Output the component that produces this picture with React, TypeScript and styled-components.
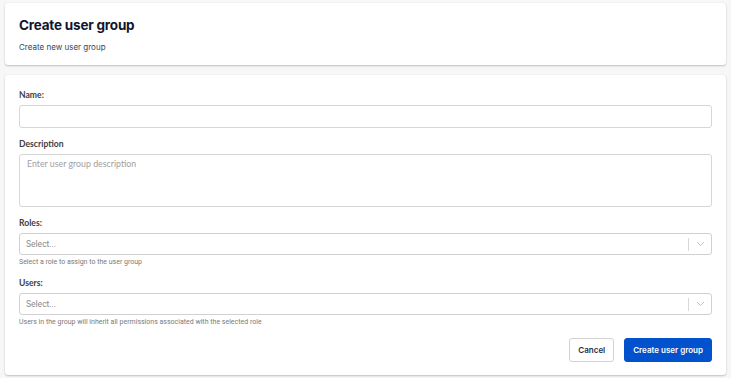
import React from 'react'
import styled, { createGlobalStyle } from 'styled-components'

const GlobalStyle = createGlobalStyle`
  html, body {
    margin: 0;
    padding: 0;
    background: #f7f7f7;
  }
  * {
    box-sizing: border-box;
  }
`

const Page = styled.div`
  width: 731px;
  height: 378px;
  padding: 3px 5px 3px 5px;
  display: flex;
  flex-direction: column;
  gap: 10px;
  background: #f7f7f7;
`

const Card = styled.div`
  width: 721px;
  background: #ffffff;
  border-radius: 3px;
  box-shadow: 0 1px 2px rgba(0, 0, 0, 0.22), 0 0 1px rgba(0, 0, 0, 0.08);
`

const HeaderCard = styled(Card)`
  flex-shrink: 0;
  height: 62px;
  padding: 14px 14px 0 14px;
`

const Title = styled.h1`
  margin: 0;
  font-family: Inter, "Liberation Sans", sans-serif;
  font-size: 13.5px;
  font-weight: 700;
  line-height: 17px;
  color: #11162e;
  letter-spacing: -0.2px;
`

const Subtitle = styled.p`
  margin: 8px 0 0 0;
  font-family: Inter, "Liberation Sans", sans-serif;
  font-size: 8px;
  line-height: 10px;
  color: #3a3f55;
`

const FormCard = styled(Card)`
  flex: 1;
  padding: 15px 14px 12px 14px;
  display: flex;
  flex-direction: column;
`

const Field = styled.div<{ $gap: number }>`
  display: flex;
  flex-direction: column;
  margin-bottom: ${(p) => p.$gap}px;
`

const Label = styled.label`
  font-family: Lato, "Liberation Sans", sans-serif;
  font-size: 8.6px;
  font-weight: 700;
  line-height: 11px;
  color: #404040;
  margin-bottom: 4px;
`

const TextInput = styled.div`
  height: 23px;
  border: 1px solid #d6d6d6;
  border-radius: 3px;
  background: #fff;
`

const TextArea = styled.div`
  height: 53px;
  border: 1px solid #d6d6d6;
  border-radius: 3px;
  background: #fff;
  padding: 3px 7px;
  font-family: Lato, "Liberation Sans", sans-serif;
  font-size: 8.8px;
  line-height: 11px;
  color: #a0a0a0;
`

const SelectBox = styled.div`
  height: 22px;
  border: 1px solid #d0d0d0;
  border-radius: 3px;
  background: #fff;
  display: flex;
  align-items: center;
  padding-left: 6px;
`

const SelectText = styled.span`
  flex: 1;
  font-family: Roboto, "Liberation Sans", sans-serif;
  font-size: 8.5px;
  color: #8a8a8a;
`

const Separator = styled.span`
  width: 1px;
  height: 13px;
  background: #d8d8d8;
`

const Chevron = styled.span`
  width: 22px;
  display: flex;
  align-items: center;
  justify-content: center;
  color: #c4c4c4;
`

const Helper = styled.div`
  margin-top: 3px;
  font-family: Roboto, "Liberation Sans", sans-serif;
  font-size: 7px;
  line-height: 8px;
  color: #7a7a7a;
`

const Actions = styled.div`
  display: flex;
  justify-content: flex-end;
  gap: 10px;
`

const Button = styled.button<{ $primary?: boolean }>`
  height: 24px;
  padding: 0 8px;
  border-radius: 3px;
  border: 1px solid ${(p) => (p.$primary ? '#0152cc' : '#d2d2d2')};
  background: ${(p) => (p.$primary ? '#0152cc' : '#fff')};
  color: ${(p) => (p.$primary ? '#fff' : '#2a2e3f')};
  font-family: Inter, "Liberation Sans", sans-serif;
  font-size: 8px;
  font-weight: 600;
  cursor: pointer;
`

const ChevronIcon = () => (
  <svg width="9" height="6" viewBox="0 0 9 6" fill="none">
    <path d="M1 1l3.5 3.5L8 1" stroke="currentColor" strokeWidth="1" />
  </svg>
)

const Select = () => (
  <SelectBox>
    <SelectText>Select...</SelectText>
    <Separator />
    <Chevron>
      <ChevronIcon />
    </Chevron>
  </SelectBox>
)

export default function App() {
  return (
    <>
      <GlobalStyle />
      <Page>
        <HeaderCard>
          <Title>Create user group</Title>
          <Subtitle>Create new user group</Subtitle>
        </HeaderCard>
        <FormCard>
          <Field $gap={11}>
            <Label>Name:</Label>
            <TextInput />
          </Field>
          <Field $gap={11}>
            <Label>Description</Label>
            <TextArea>Enter user group description</TextArea>
          </Field>
          <Field $gap={12}>
            <Label>Roles:</Label>
            <Select />
            <Helper>Select a role to assign to the user group</Helper>
          </Field>
          <Field $gap={12}>
            <Label>Users:</Label>
            <Select />
            <Helper>Users in the group will inherit all permissions associated with the selected role</Helper>
          </Field>
          <Actions>
            <Button>Cancel</Button>
            <Button $primary>Create user group</Button>
          </Actions>
        </FormCard>
      </Page>
    </>
  )
}
